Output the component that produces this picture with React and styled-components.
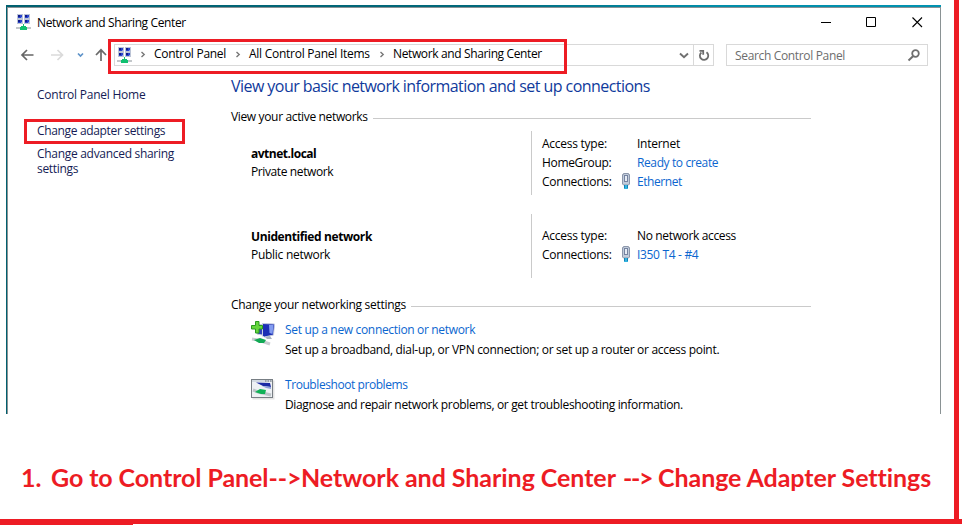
import React from "react";
import styled, { createGlobalStyle } from "styled-components";

const RED = "#ed1c24";

const Global = createGlobalStyle`
  * { box-sizing: border-box; }
  body { margin: 0; background: #fff; overflow: hidden; }
`;

const Page = styled.div`
  position: relative;
  width: 962px;
  height: 527px;
  overflow: hidden;
  background: #fff;
`;

const FrameRight = styled.div`
  position: absolute;
  top: 0;
  left: 954px;
  width: 5px;
  height: 524px;
  background: ${RED};
`;

const FrameBottom = styled.div`
  position: absolute;
  top: 519px;
  left: 0;
  width: ${(p) => p.$width}px;
  height: ${(p) => p.$height}px;
  background: ${RED};
`;

const Window = styled.div`
  width: 935px;
  height: 409px;
  margin: 0 0 0 6px;
  overflow: hidden;
  background: linear-gradient(90deg, #00606f 0%, #00687a 50%, #008da8 75%, #0092b0 100%);
  padding: 2px 0 0 1px;
`;

const WindowInner = styled.div`
  height: 407px;
  background: #fff;
  border: 1px solid #8a9294;
  border-bottom: 0;
`;

const Spacer = styled.div`
  height: ${(p) => p.$size}px;
`;

const Text = styled.span`
  display: block;
  font-family: "Open Sans", sans-serif;
  font-size: 12px;
  line-height: 17px;
  font-weight: ${(p) => (p.$bold ? 700 : 400)};
  color: ${(p) => p.$color || "#000"};
  letter-spacing: ${(p) => p.$track || -0.33}px;
  white-space: nowrap;
`;

const Link = styled(Text)`
  color: ${(p) => p.$color || "#0b66cf"};
`;

const TitleBar = styled.header`
  display: flex;
  align-items: flex-start;
  height: 30px;
  padding: 6px 17px 0 8px;
`;

const TitleText = styled(Text)`
  margin-left: 6px;
  flex: 1;
`;

const WindowControls = styled.div`
  display: flex;
  gap: 35px;
  padding-top: 3px;
`;

const AddressRow = styled.div`
  display: flex;
  align-items: center;
  height: 34px;
  padding: 0 12px;
`;

const NavButtons = styled.div`
  display: flex;
  width: 94px;
  height: 16px;
`;

const AddressBox = styled.div`
  position: relative;
  display: flex;
  align-items: center;
  width: 600px;
  height: 22px;
  border: 1px solid #d9d9d9;
  padding-left: 2px;
`;

const Crumb = styled(Text)`
  margin: -3px 0 0;
  width: ${(p) => p.$width}px;
`;

const CrumbDivider = styled.span`
  display: flex;
  width: 13px;
  margin-left: ${(p) => p.$left || 0}px;
`;

const BoxEnd = styled.div`
  display: flex;
  align-items: center;
  margin-left: auto;
  height: 20px;
`;

const RefreshCell = styled.div`
  display: flex;
  align-items: center;
  justify-content: center;
  width: 20px;
  height: 20px;
  margin-left: 4px;
  border-left: 1px solid #d9d9d9;
`;

const SearchBox = styled.div`
  display: flex;
  align-items: center;
  justify-content: space-between;
  width: 202px;
  height: 22px;
  margin-left: 12px;
  padding: 0 6px 0 8px;
  border: 1px solid #d9d9d9;
`;

const Highlight = styled.div`
  position: absolute;
  left: ${(p) => p.$x}px;
  top: ${(p) => p.$y}px;
  width: ${(p) => p.$w}px;
  height: ${(p) => p.$h}px;
  border: 3px solid ${RED};
`;

const Body = styled.div`
  display: grid;
  grid-template-columns: 194px 580px;
  padding-left: 29px;
`;

const Sidebar = styled.nav`
  padding-top: 14px;
`;

const SideLink = styled(Link)`
  position: relative;
  margin-top: ${(p) => p.$gap || 0}px;
  line-height: ${(p) => p.$line || 17}px;
`;

const Main = styled.main`
  padding-top: 3px;
`;

const Heading = styled.h1`
  margin: 0 0 11px;
  font: 400 16px/22px "Open Sans", sans-serif;
  letter-spacing: -0.55px;
  color: #0f3a9c;
  white-space: nowrap;
`;

const SectionTitle = styled.div`
  display: flex;
  align-items: center;
  gap: 5px;
  height: 17px;
  &::after {
    content: "";
    flex: 1;
    height: 1px;
    margin-top: 4px;
    background: #cacaca;
  }
`;

const Network = styled.section`
  display: grid;
  grid-template-columns: 280px 1fr;
  height: 64px;
  margin-top: ${(p) => p.$gap}px;
  padding-left: 20px;
`;

const NetworkName = styled.div`
  display: flex;
  flex-direction: column;
  gap: 1px;
  padding-top: 14px;
`;

const Details = styled.div`
  display: grid;
  grid-template-columns: 80px 15px 1fr;
  grid-auto-rows: 17px;
  row-gap: 2px;
  padding: ${(p) => p.$top}px 0 0 10px;
  border-left: 1px solid #cacaca;
`;

const Task = styled.div`
  display: grid;
  grid-template-columns: 34px 1fr;
  margin-top: ${(p) => p.$gap}px;
  padding-left: 20px;
`;

const TaskIcon = styled.div`
  padding-top: ${(p) => p.$drop || 0}px;
`;

const TaskText = styled.div`
  display: flex;
  flex-direction: column;
  gap: 3px;
`;

const Caption = styled.div`
  display: flex;
  align-items: baseline;
  margin: 48px 0 0 21px;
  font: 700 25px/30px Lato, sans-serif;
  color: ${RED};
  white-space: pre;
`;

const CaptionPart = styled.span`
  width: ${(p) => p.$width}px;
  letter-spacing: ${(p) => p.$track}px;
`;

const Cell = ({ x, y }) => (
  <g>
    <rect x={x} y={y} width="6" height="5" fill="#bcc4d6" />
    <rect x={x + 1} y={y + 1} width="4" height="3" fill="#2a44cc" />
    <rect x={x + 1} y={y + 1} width="2" height="2" fill="#0e1a8c" />
    <rect x={x + 4} y={y + 3} width="1" height="1" fill="#7f98ee" />
  </g>
);

const NetworkIcon = () => (
  <svg width="15" height="16" viewBox="0 0 15 16" shapeRendering="crispEdges">
    <Cell x={1} y={0} />
    <Cell x={8} y={0} />
    <Cell x={1} y={5} />
    <Cell x={8} y={5} />
    <rect x="0" y="13" width="15" height="2" fill="#c3c7ca" />
    <path d="M7 10h1v2h2v1h1v3H4v-3h1v-1h2z" fill="#10c070" />
  </svg>
);

const NavIcons = () => (
  <svg width="90" height="16" viewBox="0 0 90 16" fill="none" strokeWidth="1.7">
    <path d="M13.500 8H2M7 3L2 8l5 5" stroke="#666" />
    <path d="M31 8h11.500M37.500 3l5 5-5 5" stroke="#dadada" />
    <path d="M58 6.500L60.500 9 63 6.500" stroke="#5e93c9" />
    <path d="M81 14V3M76 8l5-5.200L86 8" stroke="#6a6a6a" />
  </svg>
);

const CrumbArrow = () => (
  <svg width="6" height="8" viewBox="0 0 6 8" fill="none" stroke="#777" strokeWidth="1.4">
    <path d="M.5 1L3.200 3.500 .5 6" />
  </svg>
);

const PlugIcon = () => (
  <svg width="9" height="17" viewBox="0 0 9 17">
    <path d="M1.500 .5h5v1h1v9.500l-1 1h-5l-1-1v-9.500h1z" fill="#c0cbda" stroke="#8c97ab" />
    <rect x="2.500" y="2.500" width="3" height="6" fill="#e6ecf4" stroke="#7683a0" />
    <rect x="2" y="12" width="4" height="4" fill="#35b4e0" />
    <path d="M2.500 12v3M5.500 12v3" stroke="#1580b4" />
  </svg>
);

const SetupIcon = () => (
  <svg width="25" height="25" viewBox="0 0 25 25">
    <path d="M6 4l10-1v12l-10-2z" fill="#3344bd" stroke="#c9cedb" />
    <path d="M11.500 2.500l12 .5-1 11-9 2-2-1z" fill="#1c2fb5" stroke="#c7cde0" />
    <path d="M18 4h4.500l-1 9-3-1z" fill="#829cf0" />
    <path d="M14 16l5-1 2 3-5 0z" fill="#a9b3c0" />
    <path d="M1 18l6 1 12 4" stroke="#c9cdd1" strokeWidth="3" fill="none" />
    <path d="M3 19l6-2 6 2-2 3-5 0z" fill="#12a955" />
    <path d="M4.500 .5h3.500v4H11.500v3.500H8v4H4.500v-4H.5V4.500h4z" fill="#65d63c" stroke="#2a9a20" />
  </svg>
);

const TroubleshootIcon = () => (
  <svg width="24" height="21" viewBox="0 0 24 21">
    <rect x="1.500" y="1.500" width="22" height="19" fill="#e4e4e4" />
    <rect x=".5" y=".5" width="21" height="18" fill="#eef1f4" stroke="#777e84" />
    <path d="M1 2h20" stroke="#d3dae2" strokeWidth="2" />
    <path d="M14 2h1.500M16.500 2H18M19 2h1.500" stroke="#636b74" />
    <path d="M5 3.500l14 .5 1 4-8-1z" fill="#1b2aa5" />
    <path d="M11 7l9 1v2l-5-1z" fill="#8fa2d8" />
    <path d="M2 11l5 2 13 3" stroke="#bcc3c8" strokeWidth="3" fill="none" />
    <path d="M4 13l5-3 6 1-1 4-4 0z" fill="#10b257" />
  </svg>
);

export default function App() {
  return (
    <Page>
      <Global />
      <Spacer $size={5} />
      <Window>
        <WindowInner>
          <TitleBar>
            <NetworkIcon />
            <TitleText $track={-0.37}>Network and Sharing Center</TitleText>
            <WindowControls>
              <svg width="11" height="11"><path d="M1 5.500h10" stroke="#000" /></svg>
              <svg width="11" height="11"><path d="M.5.5h9v9h-9z" fill="none" stroke="#000" /></svg>
              <svg width="11" height="11"><path d="M.5.5l9.500 9.500M10 .5L.5 10" stroke="#000" strokeWidth="1.100" /></svg>
            </WindowControls>
          </TitleBar>

          <AddressRow>
            <NavButtons><NavIcons /></NavButtons>
            <AddressBox>
              <NetworkIcon />
              <CrumbDivider $left={9}><CrumbArrow /></CrumbDivider>
              <Crumb $width={82} $track={-0.28}>Control Panel</Crumb>
              <CrumbDivider><CrumbArrow /></CrumbDivider>
              <Crumb $width={131} $track={-0.26}>All Control Panel Items</Crumb>
              <CrumbDivider><CrumbArrow /></CrumbDivider>
              <Crumb $width={150} $track={-0.37}>Network and Sharing Center</Crumb>
              <BoxEnd>
                <svg width="10" height="8" fill="none"><path d="M1 2.500l4 3.800L9 2.500" stroke="#707070" strokeWidth="1.900" /></svg>
                <RefreshCell>
                  <svg width="12" height="13" fill="none" stroke="#6c6c6c" strokeWidth="1.800">
                    <path d="M8.500 3.300A4.200 4.200 0 1 1 3.400 3.500" />
                    <path d="M1.500 1.900h3.700v3.900" />
                  </svg>
                </RefreshCell>
              </BoxEnd>
              <Highlight $x={-7} $y={-6} $w={459} $h={35} />
            </AddressBox>
            <SearchBox>
              <Text $color="#6d6d6d" $track={-0.34}>Search Control Panel</Text>
              <svg width="14" height="14" fill="none" stroke="#6f6f6f">
                <circle cx="8.500" cy="5.500" r="3.300" strokeWidth="1.800" />
                <path d="M6 8.200L1.500 12.500" strokeWidth="2" />
              </svg>
            </SearchBox>
          </AddressRow>

          <Body>
            <Sidebar>
              <SideLink $color="#151c55" $track={-0.24}>Control Panel Home</SideLink>
              <SideLink $color="#151c55" $track={-0.34} $gap={19}>
                Change adapter settings
                <Highlight $x={-13} $y={-3} $w={161} $h={25} />
              </SideLink>
              <SideLink $color="#151c55" $track={-0.3} $gap={7} $line={15}>
                Change advanced sharing<br />settings
              </SideLink>
            </Sidebar>

            <Main>
              <Heading>View your basic network information and set up connections</Heading>
              <SectionTitle><Text $track={-0.35}>View your active networks</Text></SectionTitle>

              <Network $gap={6}>
                <NetworkName>
                  <Text $bold $track={-0.48}>avtnet.local</Text>
                  <Text $track={-0.39}>Private network</Text>
                </NetworkName>
                <Details $top={4}>
                  <Text $track={-0.26}>Access type:</Text><span /><Text $track={-0.26}>Internet</Text>
                  <Text $track={-0.34}>HomeGroup:</Text><span /><Link $track={-0.39}>Ready to create</Link>
                  <Text $track={-0.25}>Connections:</Text><PlugIcon /><Link $track={-0.44}>Ethernet</Link>
                </Details>
              </Network>

              <Network $gap={19}>
                <NetworkName>
                  <Text $bold $track={-0.4}>Unidentified network</Text>
                  <Text $track={-0.28}>Public network</Text>
                </NetworkName>
                <Details $top={13}>
                  <Text $track={-0.26}>Access type:</Text><span /><Text $track={-0.35}>No network access</Text>
                  <Text $track={-0.25}>Connections:</Text><PlugIcon /><Link $track={-0.32}>I350 T4 - #4</Link>
                </Details>
              </Network>

              <Spacer $size={18} />
              <SectionTitle><Text $track={-0.28}>Change your networking settings</Text></SectionTitle>
              <Task $gap={8}>
                <TaskIcon><SetupIcon /></TaskIcon>
                <TaskText>
                  <Link>Set up a new connection or network</Link>
                  <Text $track={-0.31}>Set up a broadband, dial-up, or VPN connection; or set up a router or access point.</Text>
                </TaskText>
              </Task>
              <Task $gap={18}>
                <TaskIcon $drop={3}><TroubleshootIcon /></TaskIcon>
                <TaskText>
                  <Link $track={-0.43}>Troubleshoot problems</Link>
                  <Text $track={-0.345}>Diagnose and repair network problems, or get troubleshooting information.</Text>
                </TaskText>
              </Task>
            </Main>
          </Body>
        </WindowInner>
      </Window>

      <Caption>
        <CaptionPart $width={30} $track={0}>1.</CaptionPart>
        <CaptionPart $width={250} $track={-0.08}>{"Go to Control Panel-->"}</CaptionPart>
        <CaptionPart $width={322} $track={-0.05}>Network and Sharing Center</CaptionPart>
        <CaptionPart $width={35} $track={-1.3}>{"-->"}</CaptionPart>
        <CaptionPart $width={274} $track={-0.06}>Change Adapter Settings</CaptionPart>
      </Caption>

      <FrameRight />
      <FrameBottom $width={962} $height={5} />
      <FrameBottom $width={133} $height={6} />
    </Page>
  );
}
